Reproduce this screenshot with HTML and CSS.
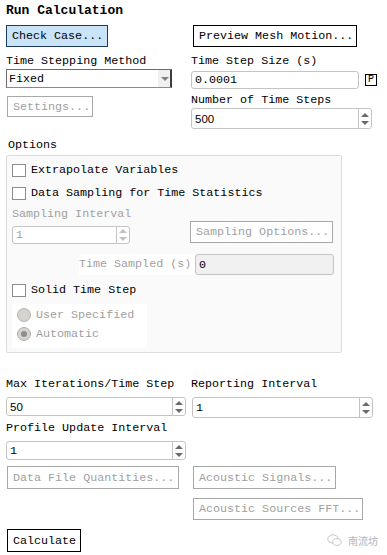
FILE: index.html
```html
<!DOCTYPE html>
<html>
	<head>
		<meta charset="UTF-8">
		<title>Run Calculation</title>
		<link rel="stylesheet" href="styles.css">
	</head>
	<body>
		<div id="page">
			<div class="title">Run Calculation</div>

			<div class="cols top">
				<div><span class="btn check">Check Case...</span></div>
				<div><span class="btn preview">Preview Mesh Motion...</span></div>
			</div>

			<div class="cols method">
				<div>
					<div class="lbl">Time Stepping Method</div>
					<div class="combo"><span>Fixed</span><span class="drop"></span></div>
					<span class="btn off settings">Settings...</span>
				</div>
				<div>
					<div class="lbl">Time Step Size (s)</div>
					<div class="step-row">
						<div class="field step">0.0001</div>
						<span class="pbtn">P</span>
					</div>
					<div class="lbl nsteps">Number of Time Steps</div>
					<div class="field spin wide"><span class="sans">500</span><span class="arr"></span></div>
				</div>
			</div>

			<div class="lbl options">Options</div>
			<div class="group">
				<div class="chk-row"><span class="chk"></span>Extrapolate Variables</div>
				<div class="chk-row"><span class="chk"></span>Data Sampling for Time Statistics</div>
				<div class="lbl off sint">Sampling Interval</div>
				<div class="samp-row">
					<div class="field spin dis small"><span>1</span><span class="arr"></span></div>
					<span class="btn off sopt">Sampling Options...</span>
				</div>
				<div class="tsamp-row">
					<span class="tlbl">Time Sampled (s)</span>
					<div class="field grey tsamp">0</div>
				</div>
				<div class="chk-row solid"><span class="chk"></span>Solid Time Step</div>
				<div class="radios">
					<div class="radio-row"><span class="rad"></span>User Specified</div>
					<div class="radio-row"><span class="rad on"></span>Automatic</div>
				</div>
			</div>

			<div class="cols iter">
				<div>
					<div class="lbl">Max Iterations/Time Step</div>
					<div class="field spin left"><span class="sans">50</span><span class="arr"></span></div>
					<div class="lbl profile">Profile Update Interval</div>
					<div class="field spin left"><span>1</span><span class="arr"></span></div>
				</div>
				<div>
					<div class="lbl">Reporting Interval</div>
					<div class="field spin wide report"><span>1</span><span class="arr"></span></div>
				</div>
			</div>

			<div class="cols acoustic">
				<div><span class="btn off dfq">Data File Quantities...</span></div>
				<div>
					<span class="btn off asig">Acoustic Signals...</span>
					<span class="btn off afft">Acoustic Sources FFT...</span>
				</div>
			</div>

			<div class="bottom">
				<span class="btn calc">Calculate</span>
				<span class="mark">
					<svg width="15" height="13" viewBox="0 0 15 13">
						<ellipse cx="6" cy="5" rx="5.2" ry="4.2" fill="none" stroke="#c8c8c8" stroke-width="1"/>
						<ellipse cx="10" cy="8" rx="4.2" ry="3.4" fill="#fff" stroke="#c8c8c8" stroke-width="1"/>
					</svg>
					南流坊
				</span>
			</div>
		</div>
	</body>
</html>
```

FILE: styles.css
```css
*{margin: 0;padding: 0;box-sizing: border-box;}
body{
	background: #fff;
	color: #000;
	font-family: "Liberation Mono", "Noto Sans CJK SC", monospace;
	font-size: 11.7px;
}
#page{
	width: 387px;
	padding: 4px 0 0 6px;
	display: flex;
	flex-direction: column;
}
.title{
	font-weight: bold;
	font-size: 13px;
	height: 14px;
	line-height: 14px;
}
.cols{
	display: grid;
	grid-template-columns: 185px 1fr;
}
.lbl{
	height: 14px;
	line-height: 14px;
	white-space: nowrap;
}
.off{color: #a0a0a0;}
.sans{font-family: "Liberation Sans", sans-serif;font-size: 11.5px;}

/* buttons */
.btn{
	display: flex;
	align-items: center;
	height: 22px;
	padding: 0 5px;
	border: 1px solid #000;
	background: #fff;
	white-space: nowrap;
}
.btn.off{border-color: #a8a8a8;}
.top{margin-top: 7px;}
.check{
	width: 102px;
	background: #c9e3f8;
	border-color: #1c3b5e;
}
.preview{width: 164px;margin-left: 2px;}
.settings{width: 86px;height: 21px;margin: 8px 0 0 1px;}

/* combo */
.method{margin-top: 7px;}
.combo{
	margin-top: 1px;
	width: 166px;
	height: 19px;
	border: 1px solid #6d6d6d;
	border-right-color: #3a3a3a;
	border-bottom-color: #8a8a8a;
	display: flex;
	align-items: center;
	justify-content: space-between;
	padding-left: 2px;
}
.drop{
	width: 14px;
	height: 17px;
	border-left: 1px solid #fff;
	border-right: 1px solid #404040;
	background: #f0f0f0;
	position: relative;
}
.drop::after{
	content: "";
	position: absolute;
	left: 3px;
	top: 7px;
	border: 4px solid transparent;
	border-top: 4px solid #808080;
	border-bottom: 0;
}

/* fields */
.field{
	height: 18px;
	border: 1px solid #c4c4c4;
	border-radius: 3px;
	background: #fff;
	display: flex;
	align-items: center;
	padding-left: 3px;
}
.field.grey{background: #f0f0f0;}
.step-row{
	margin-top: 3px;
	display: flex;
	align-items: center;
}
.step{width: 168px;}
.pbtn{
	margin-left: 6px;
	width: 12px;
	height: 12px;
	border: 1px solid #000;
	font-size: 10px;
	line-height: 10px;
	text-align: center;
}
.nsteps{margin-top: 4px;}
.spin{
	justify-content: space-between;
	padding-right: 0;
}
.spin.wide{width: 181px;height: 21px;margin-top: 1px;}
.spin.left{width: 180px;height: 19px;}
.arr{
	width: 13px;
	height: 100%;
	border-left: 1px solid #c4c4c4;
	position: relative;
}
.arr::before,.arr::after{
	content: "";
	position: absolute;
	left: 2px;
	border: 4px solid transparent;
}
.arr::before{top: 50%;margin-top: -6px;border-top: 0;border-bottom: 4px solid #6a6a6a;}
.arr::after{top: 50%;margin-top: 2px;border-bottom: 0;border-top: 4px solid #6a6a6a;}
.dis{color: #a0a0a0;}
.dis .arr::before{border-bottom-color: #c0c0c0;}
.dis .arr::after{border-top-color: #c0c0c0;}

/* options group */
.options{margin: 9px 0 0 2px;}
.group{
	margin-top: 3px;
	width: 336px;
	height: 198px;
	border: 1px solid #dcdcdc;
	border-radius: 2px;
	background: #fafafa;
	padding: 5px 0 0 5px;
}
.chk-row{
	height: 18px;
	display: flex;
	align-items: center;
	margin-bottom: 5px;
	white-space: nowrap;
}
.chk{
	width: 14px;
	height: 13px;
	border: 1px solid #8c8c8c;
	background: #fff;
	margin-right: 5px;
}
.samp-row{
	display: flex;
	align-items: flex-start;
}
.small{width: 118px;height: 18px;margin-top: 5px;}
.sopt{width: 143px;margin-left: 60px;}
.tsamp-row{
	margin-top: 10px;
	display: flex;
	align-items: center;
	padding-left: 67px;
}
.tlbl{
	background: #fff;
	color: #a0a0a0;
	height: 21px;
	line-height: 21px;
	width: 116px;
	white-space: nowrap;
}
.tsamp{width: 139px;height: 21px;}
.solid{margin-top: 6px;}
.radios{
	width: 135px;
	height: 44px;
	background: #fff;
	padding: 2px 0 0 5px;
	color: #a0a0a0;
}
.radio-row{
	height: 18px;
	display: flex;
	align-items: center;
	margin-bottom: 1px;
}
.rad{
	width: 14px;
	height: 14px;
	border-radius: 50%;
	background: #d6d3ce;
	border: 1px solid #b4b1ac;
	margin-right: 5px;
	position: relative;
}
.rad.on::after{
	content: "";
	position: absolute;
	left: 3px;
	top: 3px;
	width: 6px;
	height: 6px;
	border-radius: 50%;
	background: #8e8e8e;
}

/* bottom part */
.iter{margin-top: 24px;}
.iter .spin{margin-top: 6px;}
.profile{margin-top: 5px;}
.report{margin-left: 1px;width: 181px;height: 19px;}
.acoustic{margin-top: 6px;}
.dfq{width: 172px;height: 23px;margin-left: 1px;}
.asig{width: 143px;height: 23px;margin-left: 2px;}
.afft{width: 170px;margin: 9px 0 0 2px;}
.bottom{
	margin-top: 9px;
	display: flex;
	align-items: center;
	justify-content: space-between;
	width: 372px;
}
.calc{width: 74px;height: 23px;margin-left: 1px;}
.mark{
	display: flex;
	align-items: center;
	gap: 6px;
	color: #b4b4b4;
	font-family: "Noto Sans CJK SC", sans-serif;
	font-size: 10px;
}
```
